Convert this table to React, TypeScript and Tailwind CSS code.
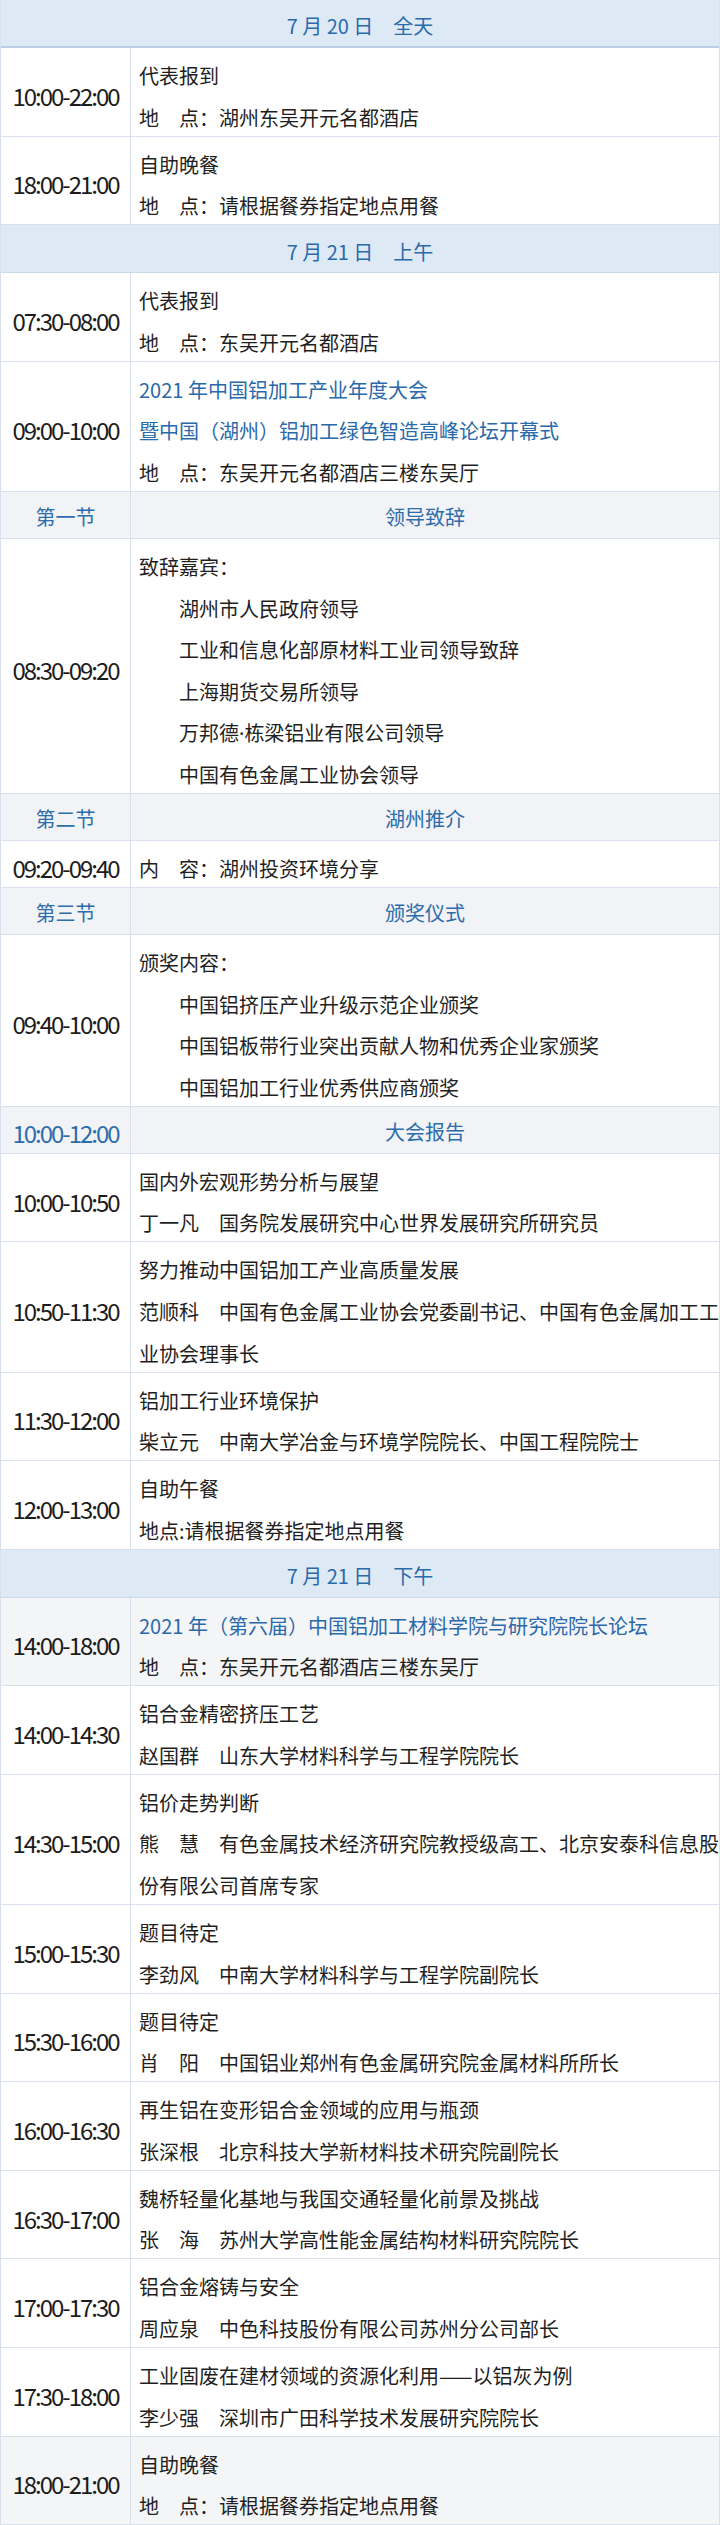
import type { ReactNode } from 'react';

type Line = { text: ReactNode; blue?: boolean; indent?: boolean };

type Row =
  | { kind: 'date'; text: string; thick?: boolean }
  | { kind: 'section'; left: string; right: string; leftIsTime?: boolean }
  | { kind: 'item'; time: string; lines: Line[]; gray?: boolean };

const t = (text: ReactNode): Line => ({ text });
const b = (text: ReactNode): Line => ({ text, blue: true });
const i = (text: ReactNode): Line => ({ text, indent: true });

const rows: Row[] = [
  { kind: 'date', text: '7 月 20 日　全天', thick: true },
  { kind: 'item', time: '10:00-22:00', lines: [t('代表报到'), t('地　点：湖州东吴开元名都酒店')] },
  { kind: 'item', time: '18:00-21:00', lines: [t('自助晚餐'), t('地　点：请根据餐券指定地点用餐')] },
  { kind: 'date', text: '7 月 21 日　上午' },
  { kind: 'item', time: '07:30-08:00', lines: [t('代表报到'), t('地　点：东吴开元名都酒店')] },
  {
    kind: 'item',
    time: '09:00-10:00',
    lines: [
      b('2021 年中国铝加工产业年度大会'),
      b('暨中国（湖州）铝加工绿色智造高峰论坛开幕式'),
      t('地　点：东吴开元名都酒店三楼东吴厅'),
    ],
  },
  { kind: 'section', left: '第一节', right: '领导致辞' },
  {
    kind: 'item',
    time: '08:30-09:20',
    lines: [
      t('致辞嘉宾：'),
      i('湖州市人民政府领导'),
      i('工业和信息化部原材料工业司领导致辞'),
      i('上海期货交易所领导'),
      i(
        <>
          万邦德<span className="font-['Noto_Sans',sans-serif]">·</span>栋梁铝业有限公司领导
        </>,
      ),
      i('中国有色金属工业协会领导'),
    ],
  },
  { kind: 'section', left: '第二节', right: '湖州推介' },
  { kind: 'item', time: '09:20-09:40', lines: [t('内　容：湖州投资环境分享')] },
  { kind: 'section', left: '第三节', right: '颁奖仪式' },
  {
    kind: 'item',
    time: '09:40-10:00',
    lines: [
      t('颁奖内容：'),
      i('中国铝挤压产业升级示范企业颁奖'),
      i('中国铝板带行业突出贡献人物和优秀企业家颁奖'),
      i('中国铝加工行业优秀供应商颁奖'),
    ],
  },
  { kind: 'section', left: '10:00-12:00', right: '大会报告', leftIsTime: true },
  {
    kind: 'item',
    time: '10:00-10:50',
    lines: [t('国内外宏观形势分析与展望'), t('丁一凡　国务院发展研究中心世界发展研究所研究员')],
  },
  {
    kind: 'item',
    time: '10:50-11:30',
    lines: [
      t('努力推动中国铝加工产业高质量发展'),
      t('范顺科　中国有色金属工业协会党委副书记、中国有色金属加工工'),
      t('业协会理事长'),
    ],
  },
  {
    kind: 'item',
    time: '11:30-12:00',
    lines: [t('铝加工行业环境保护'), t('柴立元　中南大学冶金与环境学院院长、中国工程院院士')],
  },
  { kind: 'item', time: '12:00-13:00', lines: [t('自助午餐'), t('地点:请根据餐券指定地点用餐')] },
  { kind: 'date', text: '7 月 21 日　下午' },
  {
    kind: 'item',
    time: '14:00-18:00',
    gray: true,
    lines: [b('2021 年（第六届）中国铝加工材料学院与研究院院长论坛'), t('地　点：东吴开元名都酒店三楼东吴厅')],
  },
  { kind: 'item', time: '14:00-14:30', lines: [t('铝合金精密挤压工艺'), t('赵国群　山东大学材料科学与工程学院院长')] },
  {
    kind: 'item',
    time: '14:30-15:00',
    lines: [
      t('铝价走势判断'),
      t('熊　慧　有色金属技术经济研究院教授级高工、北京安泰科信息股'),
      t('份有限公司首席专家'),
    ],
  },
  { kind: 'item', time: '15:00-15:30', lines: [t('题目待定'), t('李劲风　中南大学材料科学与工程学院副院长')] },
  { kind: 'item', time: '15:30-16:00', lines: [t('题目待定'), t('肖　阳　中国铝业郑州有色金属研究院金属材料所所长')] },
  {
    kind: 'item',
    time: '16:00-16:30',
    lines: [t('再生铝在变形铝合金领域的应用与瓶颈'), t('张深根　北京科技大学新材料技术研究院副院长')],
  },
  {
    kind: 'item',
    time: '16:30-17:00',
    lines: [t('魏桥轻量化基地与我国交通轻量化前景及挑战'), t('张　海　苏州大学高性能金属结构材料研究院院长')],
  },
  { kind: 'item', time: '17:00-17:30', lines: [t('铝合金熔铸与安全'), t('周应泉　中色科技股份有限公司苏州分公司部长')] },
  {
    kind: 'item',
    time: '17:30-18:00',
    lines: [t('工业固废在建材领域的资源化利用——以铝灰为例'), t('李少强　深圳市广田科学技术发展研究院院长')],
  },
  {
    kind: 'item',
    time: '18:00-21:00',
    gray: true,
    lines: [t('自助晚餐'), t('地　点：请根据餐券指定地点用餐')],
  },
];

const DateRow = ({ text, thick }: { text: string; thick?: boolean }) => (
  <div
    className={`flex h-[48px] items-center justify-center bg-[#dde9f5] pt-[6px] leading-[30px] text-[#2a69aa] ${
      thick ? 'border-b-2 border-[#bccfe4]' : 'border-b border-[#ccdae9]'
    }`}
  >
    {text}
  </div>
);

const SectionRow = ({ left, right, leftIsTime }: { left: string; right: string; leftIsTime?: boolean }) => (
  <div className="flex h-[47px] border-b border-[#d7e0eb] bg-[#f1f3f6] leading-[30px] text-[#2d6dab]">
    <div
      className={`flex w-[130px] shrink-0 items-center justify-center border-r border-[#d7e0eb] ${
        leftIsTime ? 'pt-[6px] text-[24px] tracking-[-2px]' : 'pt-[4px]'
      }`}
    >
      {left}
    </div>
    <div className="flex flex-1 items-center justify-center pt-[4px]">{right}</div>
  </div>
);

const ItemRow = ({ time, lines, gray }: { time: string; lines: Line[]; gray?: boolean }) => (
  <div className={`flex border-b border-[#d7e0eb] ${gray ? 'bg-[#f4f5f7]' : 'bg-white'}`}>
    <div className="flex w-[130px] shrink-0 items-center justify-center border-r border-[#d7e0eb] pt-[8px] text-[24px] leading-[30px] tracking-[-2px] text-[#1c1c1c]">
      {time}
    </div>
    <div className="-mb-[2.6px] min-w-0 flex-1 pl-[8px] pt-[7px]">
      {lines.map((line, idx) => (
        <div
          key={idx}
          className={`h-[41.6px] whitespace-nowrap leading-[41.6px] ${
            line.blue ? 'text-[#2a69aa]' : 'text-[#1f1f1f]'
          } ${line.indent ? 'pl-[40px]' : ''}`}
        >
          {line.text}
        </div>
      ))}
    </div>
  </div>
);

export default function App() {
  return (
    <div className="w-[720px] bg-white font-['Noto_Sans_CJK_SC','Noto_Sans',sans-serif] text-[20px]">
      <div className="border-x border-[#d7e0eb]">
        {rows.map((row, idx) => {
          if (row.kind === 'date') return <DateRow key={idx} text={row.text} thick={row.thick} />;
          if (row.kind === 'section')
            return <SectionRow key={idx} left={row.left} right={row.right} leftIsTime={row.leftIsTime} />;
          return <ItemRow key={idx} time={row.time} lines={row.lines} gray={row.gray} />;
        })}
      </div>
    </div>
  );
}
